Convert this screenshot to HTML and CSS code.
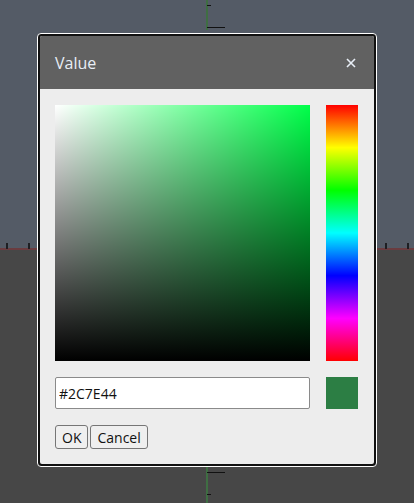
FILE: index.html
```html
<!DOCTYPE html>
<html>
<head>
<meta charset="utf-8">
<link rel="stylesheet" href="styles.css">
</head>
<body>
<div class="scene">
  <div class="bg-top"></div>
  <div class="bg-bottom"></div>
  <div class="axis-x"></div>
  <div class="tick tick-l1"></div>
  <div class="tick tick-l2"></div>
  <div class="tick tick-r1"></div>
  <div class="tick tick-r2"></div>
  <div class="axis-y axis-y-top"></div>
  <div class="axis-y axis-y-bottom"></div>
  <div class="ytick ytick-1"></div>
  <div class="ytick ytick-2"></div>
  <div class="ytick ytick-3"></div>
  <div class="ytick ytick-4"></div>

  <div class="dialog">
    <div class="dialog-inner">
      <div class="header">
        <span class="title">Value</span>
        <svg class="close" width="10" height="10" viewBox="0 0 10 10">
          <path d="M1 1 L9 9 M9 1 L1 9" stroke="#e8eef6" stroke-width="1.6" fill="none"/>
        </svg>
      </div>
      <div class="body">
        <div class="picker-row">
          <div class="sv">
            <div class="sv-white"></div>
            <div class="sv-black"></div>
          </div>
          <div class="hue"></div>
        </div>
        <div class="value-row">
          <input class="hex" type="text" value="#2C7E44">
          <div class="swatch"></div>
        </div>
        <div class="buttons">
          <button class="btn">OK</button><button class="btn">Cancel</button>
        </div>
      </div>
    </div>
  </div>
</div>
</body>
</html>
```
FILE: styles.css
```css
html, body {
  margin: 0;
  padding: 0;
}
body {
  width: 414px;
  height: 503px;
  overflow: hidden;
  font-family: "Open Sans", "Noto Sans", sans-serif;
}
.scene {
  position: relative;
  width: 414px;
  height: 503px;
}
.bg-top {
  height: 249px;
  background: #545b66;
}
.bg-bottom {
  height: 254px;
  background: #474747;
}
.axis-x {
  position: absolute;
  left: 0;
  top: 248px;
  width: 414px;
  height: 2px;
  background: #6a3c40;
}
.tick {
  position: absolute;
  top: 243px;
  width: 2px;
  height: 6px;
  background: #1e1e22;
}
.tick-l1 { left: 6px; }
.tick-l2 { left: 28px; }
.tick-r1 { left: 385px; }
.tick-r2 { left: 407px; }
.axis-y {
  position: absolute;
  left: 206px;
  width: 2px;
  background: #3f6e43;
}
.axis-y-top { top: 0; height: 30px; }
.axis-y-bottom { top: 467px; height: 36px; }
.ytick {
  position: absolute;
  left: 207px;
  height: 1px;
  background: #111;
}
.ytick-1 { top: 5px; width: 4px; }
.ytick-2 { top: 27px; width: 18px; }
.ytick-3 { top: 472px; width: 18px; }
.ytick-4 { top: 494px; width: 4px; }

.dialog {
  position: absolute;
  left: 37px;
  top: 33px;
  width: 338px;
  height: 432px;
  border: 1px solid #ffffff;
  border-radius: 4px;
  background: #111;
}
.dialog-inner {
  margin: 2px;
  height: 428px;
  border-radius: 2px;
  overflow: hidden;
  background: #ededed;
  display: flex;
  flex-direction: column;
}
.header {
  height: 53px;
  flex: none;
  background: #616161;
  display: flex;
  align-items: center;
  justify-content: space-between;
  padding: 0 18px 0 15px;
}
.title {
  color: #e8eef6;
  font-size: 16px;
}
.close {
  display: block;
  margin-top: 1px;
}
.body {
  padding: 16px 16px 0 15px;
}
.picker-row {
  display: flex;
  gap: 16px;
}
.sv {
  position: relative;
  width: 256px;
  height: 256px;
  background: #00ff49;
}
.sv-white {
  position: absolute;
  inset: 0;
  background: linear-gradient(to right, #ffffff, rgba(255,255,255,0));
}
.sv-black {
  position: absolute;
  inset: 0;
  background: linear-gradient(to bottom, rgba(0,0,0,0), #000000);
}
.hue {
  width: 32px;
  height: 256px;
  background: linear-gradient(to bottom, #ff0000 0%, #ffff00 16.67%, #00ff00 33.33%, #00ffff 50%, #0000ff 66.67%, #ff00ff 83.33%, #ff0000 100%);
}
.value-row {
  display: flex;
  gap: 16px;
  margin-top: 16px;
}
.hex {
  box-sizing: border-box;
  width: 256px;
  height: 32px;
  margin: 0;
  border: 1px solid #8a8a8a;
  border-radius: 2px;
  background: #fff;
  padding: 0 3px;
  font-family: "Open Sans", "Noto Sans", sans-serif;
  font-size: 14px;
  color: #111;
  outline: none;
}
.swatch {
  width: 32px;
  height: 32px;
  background: #2c7e44;
}
.buttons {
  display: flex;
  gap: 2px;
  margin-top: 16px;
}
.btn {
  box-sizing: border-box;
  height: 24px;
  margin: 0;
  padding: 0 6px;
  border: 1px solid #767676;
  border-radius: 3px;
  background: #efefef;
  font-family: "Open Sans", "Noto Sans", sans-serif;
  font-size: 14px;
  color: #111;
}
```
